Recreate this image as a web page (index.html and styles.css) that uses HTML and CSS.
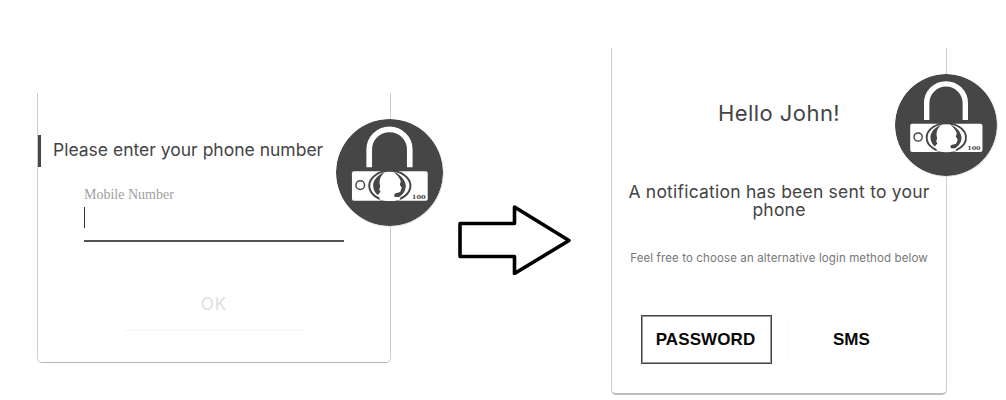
FILE: index.html
```html
<!DOCTYPE html>
<html lang="en">
<head>
<meta charset="utf-8">
<title>Phone login</title>
<link rel="stylesheet" href="styles.css">
</head>
<body>
<main class="flow">
  <section class="card card-phone">
    <svg class="badge badge-phone" viewBox="30 27 322 322">
      <circle cx="191" cy="188" r="161" fill="#464646"/>
      <path d="M130 172V119a61 61 0 0 1 122 0v53" fill="none" stroke="#fff" stroke-width="17"/>
      <rect x="78" y="184" width="228" height="89" rx="6" fill="#fff"/>
      <circle cx="103" cy="226" r="13" fill="none" stroke="#464646" stroke-width="4.5"/>
      <ellipse cx="192" cy="228" rx="62" ry="45" fill="#fff" stroke="#464646" stroke-width="6"/>
      <path d="M176 187C152 197 141 212 142 230c1 12 6 20 14 26l8-10-4-7 3-8-2-13c0-13 5-21 15-31Z" fill="#464646"/>
      <path d="M203 185c20 9 35 24 37 42 0 15-8 27-19 34l-16 5 1-14 17-5 5-13-6-9 3-11c-3-10-12-19-22-29Z" fill="#464646"/>
      <ellipse cx="192" cy="267" rx="32" ry="7" fill="#fff"/>
      <text class="lock-text" x="258" y="267" textLength="42" lengthAdjust="spacingAndGlyphs">100</text>
    </svg>
    <h1 class="prompt">Please enter your phone number</h1>
    <div class="field">
      <label class="field-label">Mobile Number</label>
      <div class="field-input"><span class="caret"></span></div>
    </div>
    <button class="ok">OK</button>
  </section>
  <svg class="arrow" width="114" height="72" viewBox="0 0 114 72">
    <path d="M3 20.500H57.500V4L112 37.500 57.500 70.500V53.500H3Z" fill="#fff" stroke="#000" stroke-width="3.600" stroke-linejoin="round"/>
  </svg>
  <section class="card card-choice">
    <svg class="badge badge-choice" viewBox="30 27 322 322">
      <circle cx="191" cy="188" r="161" fill="#464646"/>
      <path d="M130 172V119a61 61 0 0 1 122 0v53" fill="none" stroke="#fff" stroke-width="17"/>
      <rect x="78" y="184" width="228" height="89" rx="6" fill="#fff"/>
      <circle cx="103" cy="226" r="13" fill="none" stroke="#464646" stroke-width="4.5"/>
      <ellipse cx="192" cy="228" rx="62" ry="45" fill="#fff" stroke="#464646" stroke-width="6"/>
      <path d="M176 187C152 197 141 212 142 230c1 12 6 20 14 26l8-10-4-7 3-8-2-13c0-13 5-21 15-31Z" fill="#464646"/>
      <path d="M203 185c20 9 35 24 37 42 0 15-8 27-19 34l-16 5 1-14 17-5 5-13-6-9 3-11c-3-10-12-19-22-29Z" fill="#464646"/>
      <ellipse cx="192" cy="267" rx="32" ry="7" fill="#fff"/>
      <text class="lock-text" x="258" y="267" textLength="42" lengthAdjust="spacingAndGlyphs">100</text>
    </svg>
    <h1 class="hello">Hello John!</h1>
    <p class="sent">A notification has been sent to your<br>phone</p>
    <p class="hint">Feel free to choose an alternative login method below</p>
    <div class="actions">
      <button class="action action-on">PASSWORD</button>
      <button class="action">SMS</button>
    </div>
  </section>
</main>
</body>
</html>
```
FILE: styles.css
```css
* { box-sizing: border-box; }
body { margin: 0; background: #fff; font-family: Inter, "Open Sans", sans-serif; color: #444; }
h1, p { margin: 0; font-weight: 400; }
button { background: none; border: 0; padding: 0; }
.flow { display: flex; align-items: flex-start; width: 1006px; height: 400px; padding-left: 37px; overflow: hidden; }
.card { position: relative; flex: none; border: 1px solid #cdcdcd; border-top: 0; background: #fff; display: flex; flex-direction: column; }
.card-phone { width: 354px; height: 270px; margin-top: 93px; border-bottom: 1px solid #b5b5b5; border-radius: 0 0 5px 5px; }
.card-choice { width: 336px; height: 347px; margin: 48px 0 0 40px; border-bottom: 2px solid #bcbcbc; border-radius: 0 0 5px 5px; }
.badge { position: absolute; border-radius: 50%; box-shadow: 0.5px 0.5px 1px #ccc; }
.badge-phone { width: 107px; height: 107px; left: 298px; top: 26px; }
.badge-choice { width: 102px; height: 102px; left: 283px; top: 26px; }
.lock-text { font: 700 17px "DejaVu Serif", serif; fill: #464646; }
.prompt { margin-top: 42px; height: 32px; line-height: 29px; border-left: 3px solid #464646; padding-left: 12px; font-size: 17.5px; white-space: nowrap; }
.field { margin: 19px 0 0 46px; width: 260px; }
.field-label { display: block; height: 18px; font: 14px/18px "Liberation Serif", serif; color: #a0a0a0; }
.field-input { height: 38px; padding-top: 3px; border-bottom: 2px solid #555; }
.caret { display: block; width: 1px; height: 21px; background: #333; }
.ok { align-self: center; width: 181px; height: 53px; margin: 36px 0 0 0; border-bottom: 1px solid #f5f5f5; font: 17px/52px Inter, sans-serif; letter-spacing: 1px; color: #dedede; }
.arrow { flex: none; margin: 203px 0 0 66px; }
.hello { margin-top: 50px; text-align: center; font-size: 22px; line-height: 30px; letter-spacing: 0.45px; }
.sent { margin-top: 55px; text-align: center; font-size: 17.5px; line-height: 18px; letter-spacing: 0.22px; white-space: nowrap; }
.hint { margin-top: 31px; text-align: center; font-size: 11.5px; line-height: 16px; letter-spacing: 0.12px; color: #777; white-space: nowrap; }
.actions { display: flex; gap: 15px; margin: 49px 0 0 29px; }
.action { width: 131px; height: 49px; border: 1px solid #fbfbfb; padding-right: 2px; font: 700 17px/46px "Liberation Sans", Arial, sans-serif; letter-spacing: 0.1px; color: #080808; }
.action-on { border: 1.5px solid #444; outline: 0.5px solid #999; outline-offset: -2px; }
```
